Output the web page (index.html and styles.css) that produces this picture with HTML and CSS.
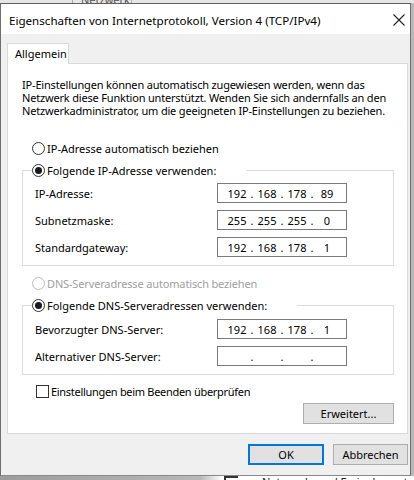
FILE: index.html
```html
<!DOCTYPE html>
<html lang="de">
<head>
<meta charset="utf-8">
<title>Eigenschaften von Internetprotokoll, Version 4 (TCP/IPv4)</title>
<link rel="stylesheet" href="styles.css">
</head>
<body>
<div class="bg-top"><span class="bg-tab">Netzwerk</span></div>
<div class="dialog">
  <div class="titlebar">
    <span class="title">Eigenschaften von Internetprotokoll, Version 4 (TCP/IPv4)</span>
    <svg class="close" width="12" height="12" viewBox="0 0 12 12"><path d="M0.5 0.5 L11.5 11.5 M11.5 0.5 L0.5 11.5" stroke="#222" stroke-width="1.1" fill="none"/></svg>
  </div>
  <div class="body">
    <div class="tabs"><div class="tab">Allgemein</div></div>
    <div class="panel">
      <div class="desc">
        <div class="line">IP-Einstellungen können automatisch zugewiesen werden, wenn das</div>
        <div class="line">Netzwerk diese Funktion unterstützt. Wenden Sie sich andernfalls an den</div>
        <div class="line">Netzwerkadministrator, um die geeigneten IP-Einstellungen zu beziehen.</div>
      </div>
      <div class="radio-row r1"><span class="radio"></span><span>IP-Adresse automatisch beziehen</span></div>
      <fieldset class="group g1">
        <legend><span class="radio checked"></span><span>Folgende IP-Adresse verwenden:</span></legend>
        <div class="field"><span class="lbl">IP-Adresse:</span><span class="ip"><span class="oct">192</span><span class="dot">.</span><span class="oct">168</span><span class="dot">.</span><span class="oct">178</span><span class="dot">.</span><span class="oct">89</span></span></div>
        <div class="field"><span class="lbl">Subnetzmaske:</span><span class="ip"><span class="oct">255</span><span class="dot">.</span><span class="oct">255</span><span class="dot">.</span><span class="oct">255</span><span class="dot">.</span><span class="oct">0</span></span></div>
        <div class="field"><span class="lbl">Standardgateway:</span><span class="ip"><span class="oct">192</span><span class="dot">.</span><span class="oct">168</span><span class="dot">.</span><span class="oct">178</span><span class="dot">.</span><span class="oct">1</span></span></div>
      </fieldset>
      <div class="radio-row r2 disabled"><span class="radio"></span><span>DNS-Serveradresse automatisch beziehen</span></div>
      <fieldset class="group g2">
        <legend><span class="radio checked"></span><span>Folgende DNS-Serveradressen verwenden:</span></legend>
        <div class="field"><span class="lbl">Bevorzugter DNS-Server:</span><span class="ip"><span class="oct">192</span><span class="dot">.</span><span class="oct">168</span><span class="dot">.</span><span class="oct">178</span><span class="dot">.</span><span class="oct">1</span></span></div>
        <div class="field"><span class="lbl">Alternativer DNS-Server:</span><span class="ip"><span class="oct"></span><span class="dot">.</span><span class="oct"></span><span class="dot">.</span><span class="oct"></span><span class="dot">.</span><span class="oct"></span></span></div>
      </fieldset>
      <div class="check-row"><span class="checkbox"></span><span>Einstellungen beim Beenden überprüfen</span></div>
      <div class="adv-row"><button class="btn adv">Erweitert...</button></div>
    </div>
    <div class="actions">
      <button class="btn ok">OK</button>
      <button class="btn">Abbrechen</button>
    </div>
  </div>
</div>
<div class="bg-bottom"><span class="bg-icon"></span><span class="bg-text">Netzwerk- und Freigabecenter</span></div>
</body>
</html>
```

FILE: styles.css
```css
* { box-sizing: border-box; }
html, body { margin: 0; padding: 0; }
body {
  width: 414px;
  height: 480px;
  overflow: hidden;
  background: #b9b9b9;
  font-family: "Noto Sans", "Open Sans", sans-serif;
  font-size: 11px;
  color: #000;
}
.bg-top {
  height: 3px;
  overflow: hidden;
  background: #e6e6e6;
  width: 414px;
}
.bg-tab {
  display: block;
  margin-left: 72px;
  width: 60px;
  height: 3px;
  line-height: 0;
  font-size: 11px;
  color: #555;
  border-left: 1px solid #aaa;
  border-right: 1px solid #aaa;
  padding-left: 8px;
}
.dialog {
  width: 411px;
  height: 473px;
  background: #f0f0f0;
  border: 1px solid #6e6e6e;
  border-top-color: #5f5f5f;
  border-bottom-color: #888;
  display: flex;
  flex-direction: column;
}
.titlebar {
  height: 30px;
  background: #fff;
  display: flex;
  align-items: center;
  justify-content: space-between;
  padding: 2px 4px 0 8px;
  flex: none;
}
.title { font-size: 11.6px; }
.close { margin-right: 1px; }
.body {
  flex: 1;
  padding: 9px 2px 0 6px;
  display: flex;
  flex-direction: column;
}
.tabs { display: flex; height: 20px; position: relative; z-index: 1; }
.tab {
  width: 62px;
  height: 21px;
  background: #fff;
  border: 1px solid #d9d9d9;
  border-bottom: none;
  padding: 2px 0 0 7px;
}
.panel {
  background: #fff;
  border: 1px solid #d9d9d9;
  padding: 14px 13px 9px 14px;
}
.desc {
  height: 39px;
  white-space: nowrap;
  letter-spacing: -0.18px;
}
.line { height: 13px; line-height: 13px; }
.radio-row, .check-row {
  display: flex;
  align-items: center;
  height: 16px;
  gap: 2px;
}
.r1 { margin: 23px 0 0 10px; }
.r2 { margin: 9px 0 0 10px; letter-spacing: -0.15px; }
.disabled { color: #a0a0a0; }
.radio {
  width: 13px;
  height: 13px;
  border: 1px solid #333;
  border-radius: 50%;
  background: #fff;
  display: inline-flex;
  align-items: center;
  justify-content: center;
  flex: none;
}
.disabled .radio { border-color: #bcbcbc; }
.radio.checked::after {
  content: "";
  width: 7px;
  height: 7px;
  border-radius: 50%;
  background: #1b1b1b;
}
.group {
  margin: 6px 0 0 0;
  width: 372px;
  border: 1px solid #dcdcdc;
  padding: 5px 0 8px 9px;
}
.g2 { padding-top: 6px; }
legend {
  padding: 0 30px 0 0;
  display: flex;
  align-items: center;
  height: 16px;
  gap: 2px;
  background: #fff;
}
.field {
  display: flex;
  align-items: center;
  height: 20px;
  margin-left: 3px;
}
.field + .field { margin-top: 7px; }
.lbl { width: 182px; }
.ip {
  width: 130px;
  height: 20px;
  border: 1px solid #7a7a7a;
  display: flex;
  align-items: center;
  padding-left: 6px;
}
.oct { width: 26px; text-align: center; }
.dot { width: 4px; text-align: center; }
.check-row { margin: 8px 0 0 14px; gap: 2px; letter-spacing: -0.3px; }
.checkbox {
  width: 13px;
  height: 13px;
  border: 1px solid #333;
  background: #fff;
  flex: none;
}
.adv-row { display: flex; justify-content: flex-end; margin-top: 4px; }
.btn {
  font-family: inherit;
  font-size: 11px;
  color: #000;
  background: #e1e1e1;
  border: 1px solid #adadad;
  height: 21px;
  width: 75px;
  padding: 0;
  margin: 0;
}
.adv { width: 91px; }
.actions {
  display: flex;
  justify-content: flex-end;
  gap: 9px;
  margin-top: 10px;
}
.ok { width: 76px; border: 2px solid #0078d7; }
.bg-bottom {
  height: 4px;
  width: 414px;
  overflow: hidden;
  background: linear-gradient(to right, #9c9c9c 0, #b8b8b8 200px, #fff 222px);
  display: flex;
  align-items: flex-start;
}
.bg-icon {
  margin-left: 224px;
  width: 14px;
  height: 4px;
  border-left: 2px solid #333;
  border-top: 2px solid #333;
  flex: none;
}
.bg-text {
  flex: none;
  margin-left: 24px;
  white-space: nowrap;
  height: 14px;
  line-height: 14px;
  margin-top: 0;
  font-size: 11px;
  color: #222;
  position: relative;
  top: -1px;
}
```
